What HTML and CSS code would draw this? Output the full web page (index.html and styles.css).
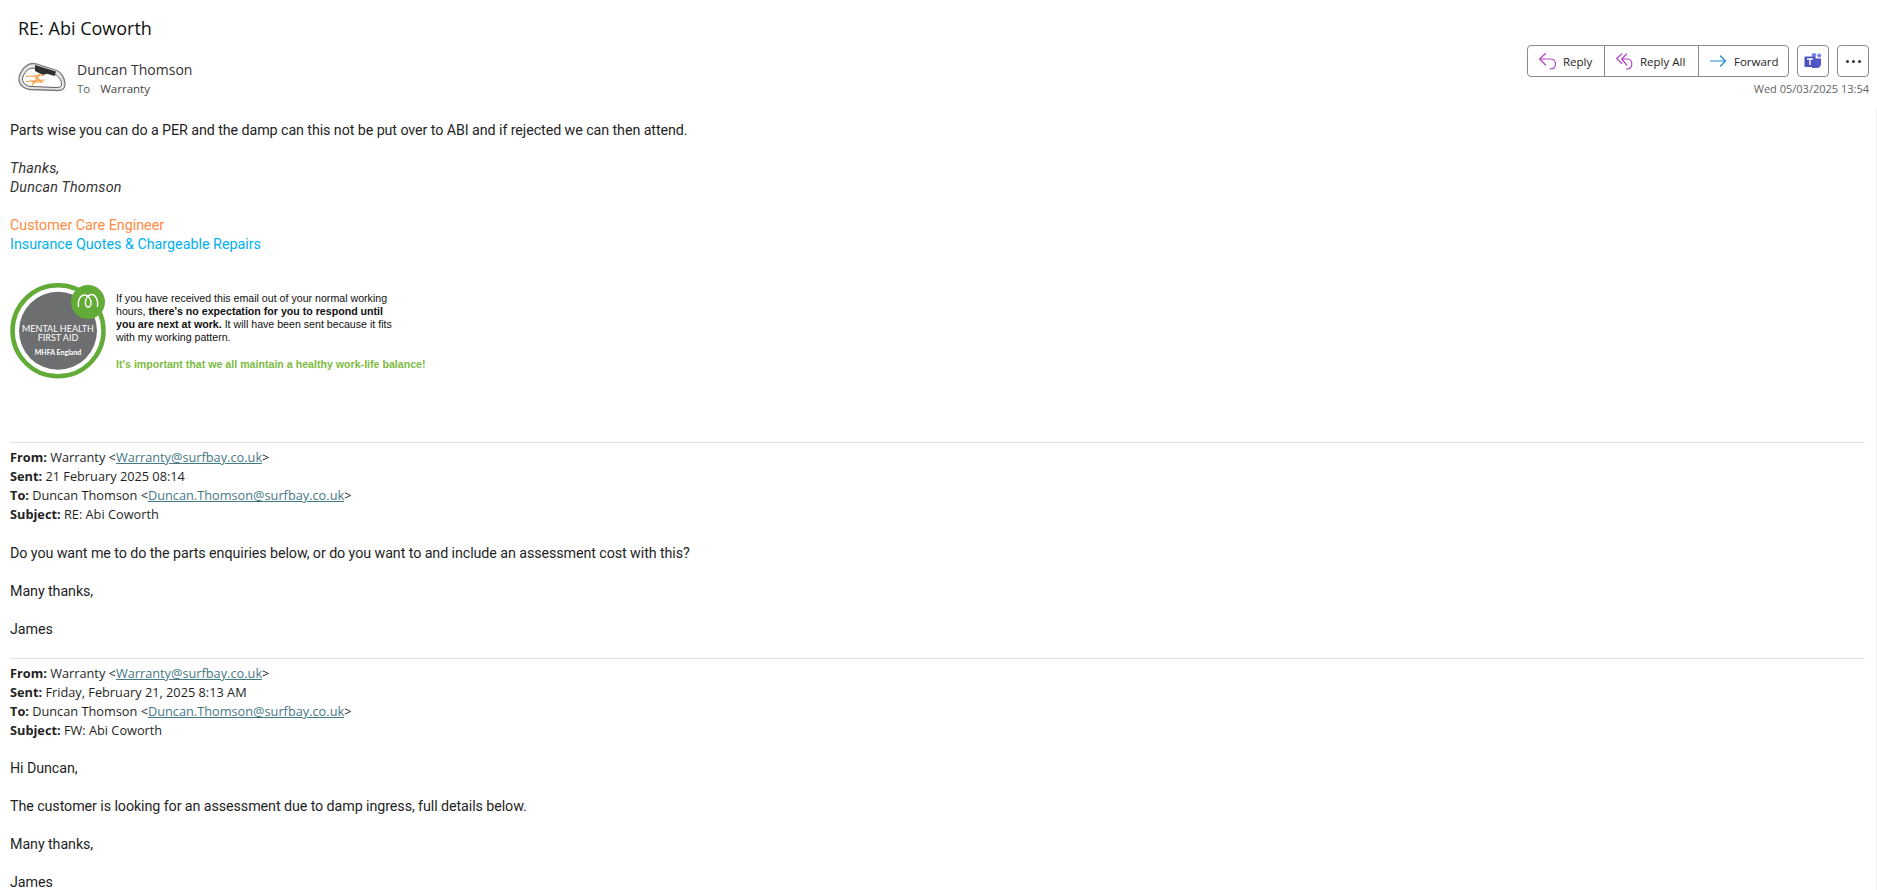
FILE: index.html
```html
<!DOCTYPE html>
<html lang="en">
<head>
  <meta charset="UTF-8">
  <meta name="viewport" content="width=device-width,initial-scale=1">
  <title>RE: Abi Coworth</title>
  <link rel="stylesheet" href="styles.css">
</head>
<body>

  <header class="mail-head">
    <div class="head-left">
      <h1 class="subject">RE: Abi Coworth</h1>
      <div class="sender">
        <svg class="avatar" viewBox="0 0 48 30" aria-hidden="true">
          <path d="M6 6 C9 2.500 13 0.800 18 1.800 L39 8.500 C43 10 47 17 47 22 C47 27 44 28.500 40 28.500 L12 27.500 C6 27 1 23 1 17 C1 13 3 9.500 6 6 Z" fill="#e4e4e4" stroke="#7d7d7d" stroke-width="1.300"/>
          <path d="M8.500 9 C10.500 6.500 14 5.500 18 6.500 L37 12.500 C40.500 14 43.500 18 43.500 22 C43.500 24.500 42 25.500 39 25.500 L13 24.500 C8 24 4.500 21 4.500 17 C4.500 14 6.500 11.500 8.500 9 Z" fill="#fff" stroke="#5e5e5e" stroke-width="1"/>
          <path d="M17 3 L38 9.500 L36.500 14 L29 11.800 L25 13 L17 9 Z" fill="#2f2f2f"/>
          <path d="M8 14.500 L27 13 M8 19.500 L27 18 M22 12 L14 23.500 M17 14.500 L24 20 L14 20" fill="none" stroke="#f49a3c" stroke-width="1.200"/>
        </svg>
        <div class="sender-text">
          <div class="sender-name">Duncan Thomson</div>
          <div class="recipients"><span class="to-label">To</span> Warranty</div>
        </div>
      </div>
    </div>

    <div class="head-right">
      <div class="actions">
        <div class="btn-group">
          <button class="btn btn-reply">
            <svg class="ico" viewBox="0 0 18 18" fill="none" stroke="#b146c2" stroke-width="1.200" stroke-linecap="round" stroke-linejoin="round"><path d="M6.500 1.500 L0.700 7 L6.500 13 M0.700 7 H11 C14.500 7 16.500 9 16.500 12 C16.500 15 14.500 17 11 17"/></svg>
            Reply
          </button>
          <button class="btn btn-replyall">
            <svg class="ico" viewBox="0 0 18 18" fill="none" stroke="#b146c2" stroke-width="1.200" stroke-linecap="round" stroke-linejoin="round"><path d="M5.700 2 L0.700 6.500 L5.700 11.300 M10.700 2 L5.700 7 L10.700 13 M5.700 7 H10.500 C14 7 15.800 9 15.800 12 C15.800 15 14 17 10.500 17"/></svg>
            Reply All
          </button>
          <button class="btn btn-forward">
            <svg class="ico" viewBox="0 0 18 18" fill="none" stroke="#1f87d6" stroke-width="1.200" stroke-linecap="round" stroke-linejoin="round"><path d="M0.500 9 H15.500 M10.500 4 L15.500 9 L10.500 14"/></svg>
            Forward
          </button>
        </div>
        <button class="btn-square" aria-label="Teams">
          <svg class="ico-teams" viewBox="0 0 18 16" aria-hidden="true">
            <circle cx="15.200" cy="2.600" r="2" fill="#7b83eb"/>
            <circle cx="10" cy="2.300" r="2.300" fill="#7b83eb"/>
            <path d="M11 5.500 H17 V11 C17 13.500 15 15 13 15 H8 V5.500 Z" fill="#5059c9"/>
            <rect x="0.500" y="3.500" width="11" height="10.500" rx="1" fill="#4b53bc"/>
            <path d="M3 6 H9 M6 6 V12" stroke="#fff" stroke-width="1.400" fill="none"/>
          </svg>
        </button>
        <button class="btn-square" aria-label="More">
          <span class="dot"></span><span class="dot"></span><span class="dot"></span>
        </button>
      </div>
      <div class="sent-date">Wed 05/03/2025 13:54</div>
    </div>
  </header>

  <main class="mail-body">
    <p>Parts wise you can do a PER and the damp can this not be put over to ABI and if rejected we can then attend.</p>
    <p class="blank">&nbsp;</p>
    <p class="sig-italic">Thanks,</p>
    <p class="sig-italic">Duncan Thomson</p>
    <p class="blank">&nbsp;</p>
    <p class="sig-role">Customer Care Engineer</p>
    <p class="sig-team">Insurance Quotes &amp; Chargeable Repairs</p>

    <div class="mhfa">
      <svg class="mhfa-badge" viewBox="0 0 96 98" aria-hidden="true">
        <circle cx="48" cy="48.800" r="45.500" fill="#fff" stroke="#62ab37" stroke-width="4.500"/>
        <circle cx="48" cy="48.800" r="39" fill="#6d6e70"/>
        <circle cx="78" cy="20" r="17" fill="#62ab37"/>
        <path d="M68.500 25 C67.500 17 71 12.500 75 13 C79 13.500 81.500 18 81 22 C80.500 26 76 26 75.500 22 C75 18 77 13 81 12.500 C85 12 88.500 17 87.500 25" fill="none" stroke="#fff" stroke-width="1.400"/>
        <text class="mhfa-big" x="48" y="50">MENTAL HEALTH</text>
        <text class="mhfa-big" x="48" y="59">FIRST AID</text>
        <text class="mhfa-small" x="48" y="73">MHFA England</text>
      </svg>
      <div class="mhfa-text">
        <div>If you have received this email out of your normal working</div>
        <div>hours, <b>there's no expectation for you to respond until</b></div>
        <div><b>you are next at work.</b> It will have been sent because it fits</div>
        <div>with my working pattern.</div>
        <div class="mhfa-note"><b>It's important that we all maintain a healthy work-life balance!</b></div>
      </div>
    </div>

    <section class="quoted">
      <div class="quoted-meta">
        <p><b>From:</b> Warranty &lt;<a href="#">Warranty@surfbay.co.uk</a>&gt;</p>
        <p><b>Sent:</b> 21 February 2025 08:14</p>
        <p><b>To:</b> Duncan Thomson &lt;<a href="#">Duncan.Thomson@surfbay.co.uk</a>&gt;</p>
        <p><b>Subject:</b> RE: Abi Coworth</p>
      </div>
      <p class="blank">&nbsp;</p>
      <p>Do you want me to do the parts enquiries below, or do you want to and include an assessment cost with this?</p>
      <p class="blank">&nbsp;</p>
      <p>Many thanks,</p>
      <p class="blank">&nbsp;</p>
      <p>James</p>
      <p class="blank">&nbsp;</p>
    </section>

    <section class="quoted">
      <div class="quoted-meta">
        <p><b>From:</b> Warranty &lt;<a href="#">Warranty@surfbay.co.uk</a>&gt;</p>
        <p><b>Sent:</b> Friday, February 21, 2025 8:13 AM</p>
        <p><b>To:</b> Duncan Thomson &lt;<a href="#">Duncan.Thomson@surfbay.co.uk</a>&gt;</p>
        <p><b>Subject:</b> FW: Abi Coworth</p>
      </div>
      <p class="blank">&nbsp;</p>
      <p>Hi Duncan,</p>
      <p class="blank">&nbsp;</p>
      <p>The customer is looking for an assessment due to damp ingress, full details below.</p>
      <p class="blank">&nbsp;</p>
      <p>Many thanks,</p>
      <p class="blank">&nbsp;</p>
      <p>James</p>
    </section>
  </main>

</body>
</html>
```

FILE: styles.css
```css
:root {
  --text: #1f1f1f;
  --muted: #616161;
  --border: #8a8a8a;
  --rule: #e1e1e1;
  --link: #467886;
}
*, *::before, *::after { box-sizing: border-box; }
html, body { height: 100%; }
body {
  display: flex;
  flex-direction: column;
  margin: 0;
  overflow: hidden;
  background: #fff;
  color: var(--text);
  font-family: "Open Sans", sans-serif;
}

/* header */
.mail-head {
  display: flex;
  flex: none;
  justify-content: space-between;
  height: 108px;
  padding: 0 8px 0 18px;
}
.subject {
  margin: 0;
  padding-top: 15px;
  font-size: 18px;
  line-height: 27px;
  font-weight: 400;
  color: #111;
}
.sender {
  display: flex;
  align-items: flex-start;
  margin-top: 20px;
}
.avatar { width: 48px; height: 30px; flex: none; }
.sender-text { margin-left: 11px; margin-top: -2px; }
.sender-name { font-size: 14px; line-height: 20px; color: #333; }
.recipients { font-size: 11.500px; line-height: 17px; color: #424242; }
.to-label { margin-right: 7px; color: var(--muted); }

.head-right { padding-top: 45px; }
.actions { display: flex; gap: 8px; }
.btn-group {
  display: flex;
  height: 32px;
  border: 1px solid var(--border);
  border-radius: 4px;
}
.btn {
  display: flex;
  align-items: center;
  height: 30px;
  padding: 0 0 0 11px;
  border: 0;
  border-right: 1px solid var(--border);
  background: none;
  font: inherit;
  font-size: 11.500px;
  color: #242424;
}
.btn:last-child { border-right: 0; }
.btn-reply { width: 77px; }
.btn-replyall { width: 94px; }
.btn-forward { width: 89px; }
.ico { width: 18px; height: 18px; margin-right: 6px; flex: none; }
.btn-square {
  display: flex;
  align-items: center;
  justify-content: center;
  gap: 3px;
  width: 32px;
  height: 32px;
  padding: 0;
  border: 1px solid var(--border);
  border-radius: 4px;
  background: none;
}
.ico-teams { width: 18px; height: 16px; }
.dot { width: 3px; height: 3px; border-radius: 50%; background: #333; }
.sent-date {
  margin-top: 4px;
  text-align: right;
  font-size: 11px;
  line-height: 16px;
  color: var(--muted);
}

/* message */
.mail-body {
  flex: 1;
  padding: 13px 11px 0 10px;
  border-right: 1px solid #f2f2f2;
  font-family: Roboto, sans-serif;
  font-size: 14.300px;
  line-height: 19px;
  letter-spacing: -0.090px;
}
.mail-body p { margin: 0; }
.mail-body a { color: var(--link); }
.sig-italic { font-style: italic; color: #333; letter-spacing: 0.200px; }
.sig-role { color: #ff8c42; letter-spacing: 0; }
.sig-team { color: #00b0f0; letter-spacing: 0; }

.mhfa {
  display: flex;
  align-items: flex-start;
  height: 160px;
  margin-top: 28px;
  letter-spacing: 0;
}
.mhfa-badge { width: 96px; height: 98px; flex: none; }
.mhfa-big {
  font-family: Lato, sans-serif;
  font-size: 9px;
  fill: #fff;
  text-anchor: middle;
}
.mhfa-small {
  font-family: Lato, sans-serif;
  font-size: 7px;
  font-weight: 700;
  fill: #fff;
  text-anchor: middle;
}
.mhfa-text {
  margin: 10px 0 0 10px;
  font-family: "Liberation Sans", sans-serif;
  font-size: 10.640px;
  line-height: 13px;
  color: #111;
}
.mhfa-note { margin-top: 14px; color: #7dbb42; }

.quoted {
  border-top: 1px solid var(--rule);
  padding-top: 5px;
}
.quoted-meta {
  margin-bottom: 1px;
  font-family: "Open Sans", sans-serif;
  font-size: 12.750px;
  letter-spacing: 0;
}
.quoted:last-child .quoted-meta { margin-bottom: 0; }
```
